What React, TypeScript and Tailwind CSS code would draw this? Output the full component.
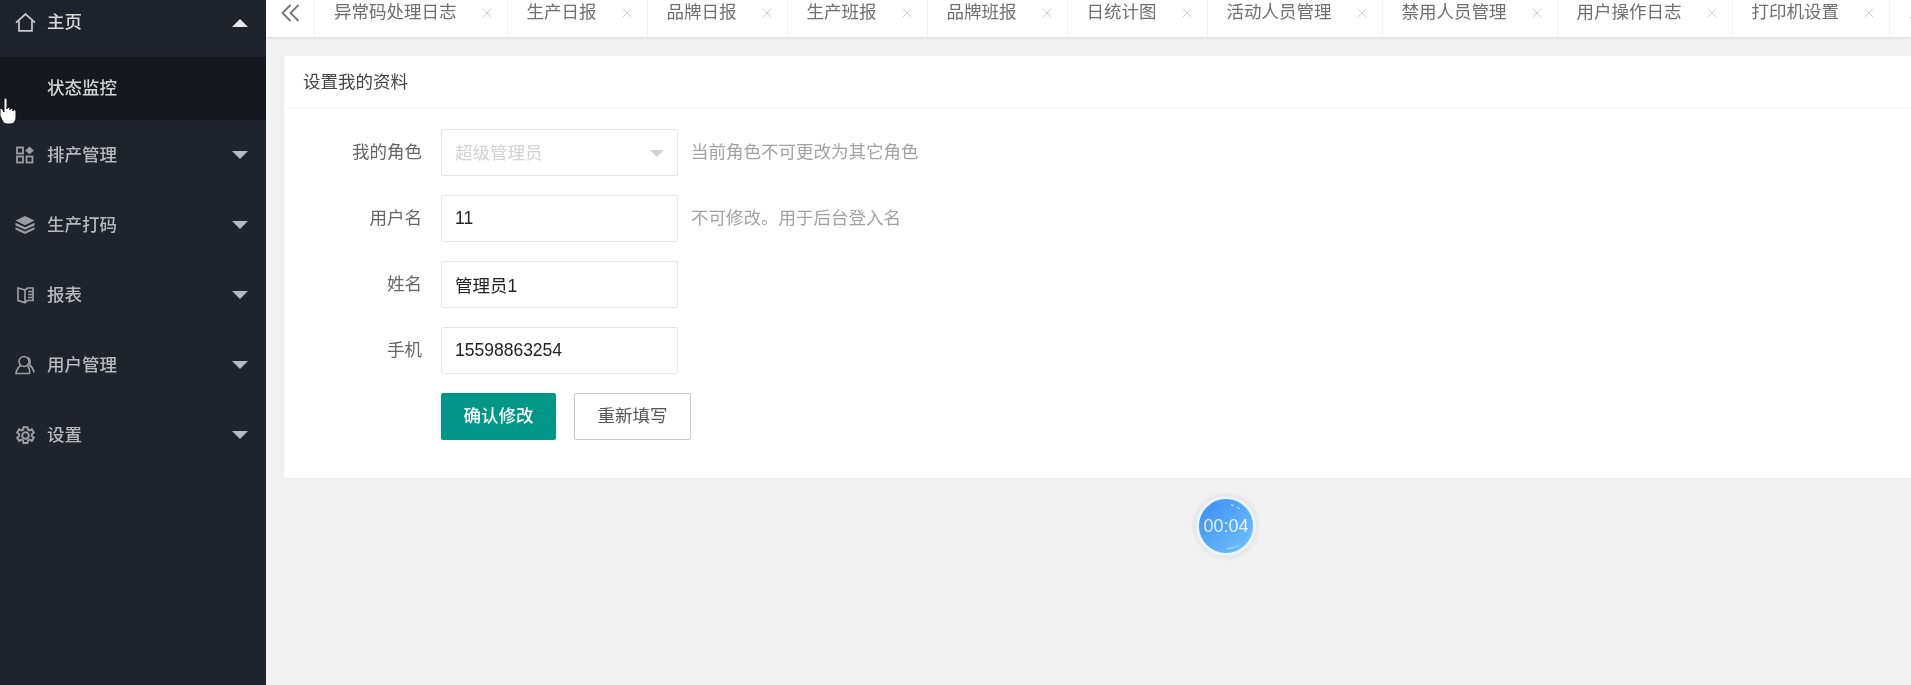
import React from 'react';
import { X } from 'lucide-react';

const font = 'font-["Liberation_Sans","Noto_Sans_CJK_SC",sans-serif]';

const IconHome = () => (
  <svg width="21" height="19" viewBox="0 0 21 19" fill="none" stroke="currentColor" strokeWidth="1.700">
    <path d="M1 9.700 10.500 1 20 9.700" />
    <path d="M4 7.500V17.800h13V7.500" />
  </svg>
);

const IconSchedule = () => (
  <svg width="18" height="18" viewBox="0 0 18 18" fill="none" stroke="currentColor" strokeWidth="1.800">
    <rect x="1" y="1.500" width="6" height="6" />
    <rect x="1" y="10.500" width="6" height="6" />
    <rect x="10.500" y="10.500" width="6" height="6" />
    <path d="M13.500 0.500 17.700 4.500 13.500 8.500 9.300 4.500Z" fill="currentColor" stroke="none" />
  </svg>
);

const IconLayers = () => (
  <svg width="20" height="18" viewBox="0 0 20 18" fill="currentColor">
    <path d="M10 0 19.500 4.600 10 9.200 0.500 4.600Z" />
    <path d="M0.500 6.800 10 11.200l9.500-4.400v2.600L10 13.800 0.500 9.400Z" />
    <path d="M0.500 11.200 10 15.400l9.500-4.200v2.400L10 18 0.500 13.600Z" />
  </svg>
);

const IconBook = () => (
  <svg width="17" height="18" viewBox="0 0 17 18" fill="none" stroke="currentColor" strokeWidth="1.700">
    <path d="M1 2 8 4V16.500L1 14.500Z" />
    <path d="M8 4 10.500 2H16V14.500H10.500L8 16.500" />
    <path d="M11 5.500h4M11 8.500h4M11 11.500h4" />
  </svg>
);

const IconUser = () => (
  <svg width="20" height="20" viewBox="0 0 20 20" fill="none" stroke="currentColor" strokeWidth="1.600">
    <circle cx="9" cy="6.500" r="5" />
    <path d="M5.500 10.500C3.500 12 1.500 15 1 18.500H14.500C15 15.500 14 12.500 12.500 10.500" />
    <path d="M13 2.500C15.500 4 15.500 8 14.500 10C16.500 11.500 18.500 14.500 19 17.500" />
  </svg>
);

const IconGear = () => (
  <svg width="21" height="21" viewBox="0 0 24 24" fill="none" stroke="currentColor" strokeWidth="2.300">
    <path d="M9.700 2.500h4.600l.6 2.900 1.700.8 2.600-1.300 2.300 3.700-2.200 1.900v2l2.200 1.900-2.300 3.700-2.600-1.300-1.700.8-.6 2.900H9.700l-.6-2.900-1.700-.8-2.600 1.300-2.300-3.700 2.200-1.900v-2L2.500 8.600l2.300-3.700 2.600 1.300 1.700-.8Z" />
    <circle cx="12" cy="12" r="3.800" />
  </svg>
);

const IconCollapse = () => (
  <svg width="19" height="18" viewBox="0 0 19 18" fill="none" stroke="currentColor" strokeWidth="1.800">
    <path d="M9.500 1 1.500 9l8 8" />
    <path d="M17.500 1 9.500 9l8 8" />
  </svg>
);

// the mouse hand sitting over the sidebar
const HandCursor = () => (
  <svg
    className="absolute left-0 top-[97px]"
    width="18"
    height="30"
    viewBox="0 0 18 30"
    fill="#fff"
    stroke="#111"
    strokeWidth="1"
  >
    <path d="M4 3c0-2.500 3-2.500 3 0v9c0-2 3-2 3 0v1c0-2 3-2 3 0v1c0-1.800 3-1.800 3 0v6c0 4-2 7-6 7H7c-3 0-4-2-5-4l-2-4V11c1 0 3 1 4 4Z" />
  </svg>
);

const menus = [
  { name: '排产管理', icon: <IconSchedule /> },
  { name: '生产打码', icon: <IconLayers /> },
  { name: '报表', icon: <IconBook /> },
  { name: '用户管理', icon: <IconUser /> },
  { name: '设置', icon: <IconGear /> },
];

const tabs = [
  '异常码处理日志',
  '生产日报',
  '品牌日报',
  '生产班报',
  '品牌班报',
  '日统计图',
  '活动人员管理',
  '禁用人员管理',
  '用户操作日志',
  '打印机设置',
  '系统设置',
];

const Sidebar = () => (
  <aside className="relative w-[266px] shrink-0 overflow-hidden bg-[#1f232b]">
    <div className="-mt-[12px]">
      <div className="flex h-[69px] items-center text-[#d8d9db]">
        <span className="flex w-[47px] justify-center pl-[3px] text-[#c8c9cc]">
          <IconHome />
        </span>
        <span className="flex-1 font-medium">主页</span>
        <span className="mr-[18px] h-0 w-0 border-x-[8px] border-b-[8px] border-x-transparent border-b-[#e8e8ea]" />
      </div>
      <div className="flex h-[63px] items-center bg-[#15191f] pl-[47px] font-medium text-[#d2d2d3]">状态监控</div>
      {menus.map((m) => (
        <div key={m.name} className="flex h-[70px] items-center text-[#b6b8bc]">
          <span className="flex w-[47px] justify-center pl-[3px] text-[#9b9da1]">{m.icon}</span>
          <span className="flex-1 font-medium">{m.name}</span>
          <span className="mr-[18px] h-0 w-0 border-x-[8px] border-t-[8px] border-x-transparent border-t-[#b8bac0]" />
        </div>
      ))}
    </div>
    <HandCursor />
  </aside>
);

const TabBar = () => (
  <div className="flex h-[37px] shrink-0 overflow-hidden bg-white shadow-[0_1px_3px_rgba(0,0,0,0.1)]">
    <div className="flex w-[49px] shrink-0 items-center justify-center border-r border-[#f3f3f3] pb-[12px] text-[#777]">
      <IconCollapse />
    </div>
    {tabs.map((t) => (
      <div key={t} className="flex w-fit shrink-0 items-center border-r border-[#f3f3f3] pb-[12px] pl-[19px] pr-[12px] text-[#6f6f6f]">
        <span className="mr-[22px] whitespace-nowrap">{t}</span>
        <X size={16} strokeWidth={1.200} className="text-[#c4c4c4]" />
      </div>
    ))}
  </div>
);

const Field = ({ label, value }: { label: string; value: string }) => (
  <div className="flex h-[47px] items-center">
    <label className="w-[138px] shrink-0 text-right text-[#666]">{label}</label>
    <input
      readOnly
      type="text"
      value={value}
      className="ml-[19px] h-full w-[237px] rounded-[2px] border border-[#e6e6e6] bg-white px-[13px] text-[#222] outline-none"
    />
  </div>
);

export default function App() {
  return (
    <div className={`flex h-[685px] w-[1911px] overflow-hidden bg-[#f1f1f1] text-[17.5px] blur-[0.4px] ${font}`}>
      <Sidebar />
      <main className="relative flex min-w-0 flex-1 flex-col">
        <TabBar />
        <div className="pl-[18px] pt-[19px]">
          <section className="rounded-l-[2px] bg-white pb-[38px] shadow-[0_1px_2px_rgba(0,0,0,0.04)]">
            <h2 className="flex h-[53px] items-center border-b border-[#f6f6f6] pl-[19px] text-[#444]">设置我的资料</h2>
            <div className="flex flex-col gap-[19px] pt-[20px]">
              <div className="flex h-[47px] items-center">
                <label className="w-[138px] shrink-0 text-right text-[#666]">我的角色</label>
                <div className="ml-[19px] flex h-full w-[237px] items-center justify-between rounded-[2px] border border-[#e6e6e6] bg-white px-[13px] pt-[1px] text-[#d2d2d2]">
                  超级管理员
                  <span className="h-0 w-0 border-x-[7px] border-t-[7px] border-x-transparent border-t-[#d2d2d2]" />
                </div>
                <span className="ml-[13px] text-[#a2a2a2]">当前角色不可更改为其它角色</span>
              </div>
              <div className="flex h-[47px] items-center">
                <label className="w-[138px] shrink-0 text-right text-[#666]">用户名</label>
                <input
                  readOnly
                  type="text"
                  value="11"
                  className="ml-[19px] h-full w-[237px] rounded-[2px] border border-[#e6e6e6] bg-white px-[13px] text-[#222] outline-none"
                />
                <span className="ml-[13px] text-[#a2a2a2]">不可修改。用于后台登入名</span>
              </div>
              <Field label="姓名" value="管理员1" />
              <Field label="手机" value="15598863254" />
              <div className="flex h-[47px] pl-[157px]">
                <button className="h-full w-[115px] rounded-[2px] bg-[#009688] font-medium text-white">确认修改</button>
                <button className="ml-[18px] h-full w-[117px] rounded-[2px] border border-[#c9c9c9] bg-white text-[#555]">重新填写</button>
              </div>
            </div>
          </section>
        </div>
        {/* countdown badge floating over the page */}
        <div className="absolute left-[930px] top-[496px] flex h-[60px] w-[60px] items-center justify-center overflow-hidden rounded-full border-[3px] border-[#e8f5fe] bg-gradient-to-br from-[#3a8cf3] to-[#72c4fa] text-[18px] text-[#e6f2fd] shadow-[0_0_6px_rgba(0,0,0,0.12)]">
          00:04
          <svg className="absolute inset-0" viewBox="0 0 54 54" fill="none" stroke="#d8ecfd" strokeWidth="1">
            <path d="M32 5.500 35 6.500M38 8 41 10" />
            <path d="M28 49.500C33 49.500 37 48 40 46" opacity="0.7" />
          </svg>
        </div>
      </main>
    </div>
  );
}
